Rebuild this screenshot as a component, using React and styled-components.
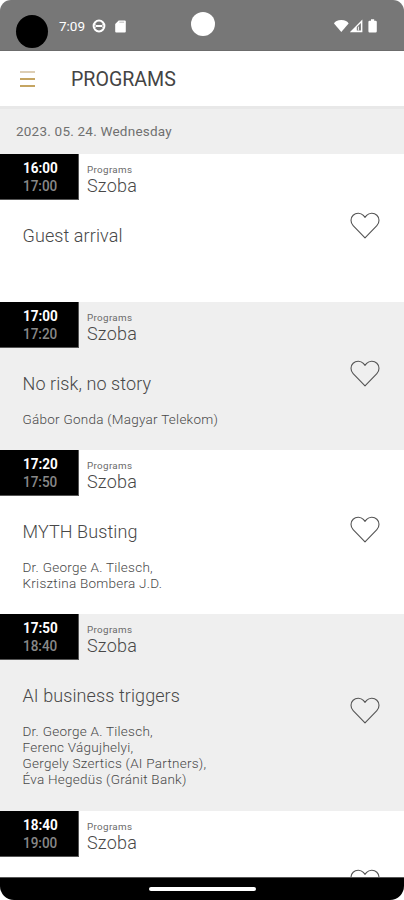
import React from 'react'
import styled, { createGlobalStyle } from 'styled-components'

const programs = [
    { start: '16:00', end: '17:00', title: 'Guest arrival', speakers: [] },
    { start: '17:00', end: '17:20', title: 'No risk, no story', speakers: ['Gábor Gonda (Magyar Telekom)'] },
    { start: '17:20', end: '17:50', title: 'MYTH Busting', speakers: ['Dr. George A. Tilesch,', 'Krisztina Bombera J.D.'] },
    {
        start: '17:50', end: '18:40', title: 'AI business triggers',
        speakers: ['Dr. George A. Tilesch,', 'Ferenc Vágujhelyi,', 'Gergely Szertics (AI Partners),', 'Éva Hegedüs (Gránit Bank)'],
    },
    { start: '18:40', end: '19:00', title: '', speakers: [] },
]

// row heights follow the number of speakers
const rowHeight = (count) => (count < 2 ? 148 : count === 2 ? 164 : 197)

function Heart() {
    return (
        <svg width="30" height="27" viewBox="0 0 31 28" fill="none" stroke="#555" strokeWidth="1.15" strokeLinejoin="round">
            <path d="M15.5 26.8 L3.2 14.1 C0.2 11 0.3 6.1 3.2 3.4 C6.3 0.5 11.1 0.8 13.8 3.6 L15.5 5.5 L17.2 3.6 C19.9 0.8 24.7 0.5 27.8 3.4 C30.7 6.1 30.8 11 27.8 14.1 Z" />
        </svg>
    )
}

function StatusBar() {
    return (
        <Status>
            <Bubble />
            <Clock>7:09</Clock>
            <Globe width="14" height="14" viewBox="0 0 14 14" fill="none" stroke="#fff">
                <circle cx="7" cy="7" r="5.4" strokeWidth="2" />
                <path d="M3.6 7h6.8" strokeWidth="1.8" />
                <path d="M1.6 5.6h2.2M10.2 5.6h2.2M1.6 8.4h2.2M10.2 8.4h2.2" strokeWidth="0.8" />
            </Globe>
            <CardIcon width="11" height="13" viewBox="0 0 11 13">
                <path d="M3.7 0.5H9.8Q10.8 0.5 10.8 1.5V11.5Q10.8 12.5 9.8 12.5H1.2Q0.2 12.5 0.2 11.5V4Z" fill="#fff" />
                <path d="M4.3 2.2h4.8" stroke="#a8a8a8" strokeWidth="0.8" />
            </CardIcon>
            <Camera />
            <Signals width="44" height="15" viewBox="0 0 44 15">
                <path d="M0 4.4Q1.5 0.9 7.3 0.9T14.6 4.4L7.3 13Z" fill="#fff" />
                <path d="M28.4 0.6V13.2H15.8Z" fill="#fff" />
                <path d="M22.8 11.4V8L26.9 4V11.4Z" fill="#777" />
                <path d="M24.4 7.6V11.4" stroke="#fff" strokeWidth="0.9" />
                <path d="M37 0.3h3.2v1.4h1.4q1.2 0 1.2 1.2v9.4q0 1.2-1.2 1.2h-6q-1.2 0-1.2-1.2V2.9q0-1.2 1.2-1.2H37z" fill="#fff" />
            </Signals>
        </Status>
    )
}

function Program({ item, gray }) {
    return (
        <Row $gray={gray} $height={rowHeight(item.speakers.length)}>
            <Info>
                <RowHead>
                    <TimeBox>
                        <Time $bold>{item.start}</Time>
                        <Time>{item.end}</Time>
                    </TimeBox>
                    <Place>
                        <Kind>Programs</Kind>
                        <Room>Szoba</Room>
                    </Place>
                </RowHead>
                <Title>{item.title}</Title>
                {item.speakers.map((name) => <Speaker key={name}>{name}</Speaker>)}
            </Info>
            <Favorite><Heart /></Favorite>
        </Row>
    )
}

function App() {
    return (
        <>
            <GlobalStyle />
            <Phone>
                <StatusBar />
                <Header>
                    <MenuButton>
                        <Line $pale /><Line /><Line />
                    </MenuButton>
                    <PageTitle>PROGRAMS</PageTitle>
                </Header>
                <DateBar>2023. 05. 24. Wednesday</DateBar>
                <List>
                    {programs.map((item, i) => <Program key={item.start} item={item} gray={i % 2 === 1} />)}
                </List>
                <NavBar><Handle /></NavBar>
            </Phone>
        </>
    )
}

const GlobalStyle = createGlobalStyle`
  * {
    box-sizing: border-box;
  }
  body {
    margin: 0;
    background: #fff;
    font-family: Roboto, sans-serif;
  }
  svg {
    display: block;
    flex-shrink: 0;
  }
`

const Phone = styled.div`
    width: 404px;
    height: 900px;
    display: flex;
    flex-direction: column;
    overflow: hidden;
    border-radius: 11px 11px 14px 14px;
    background: #fff;
`

const Status = styled.div`
    height: 51px;
    flex-shrink: 0;
    display: flex;
    align-items: center;
    padding-left: 16px;
    background: #777;
    border-bottom: 1px solid #6c6c6c;
`

const Bubble = styled.div`
    width: 32px;
    height: 33px;
    margin-top: 12px;
    border-radius: 50%;
    background: #000;
`

const Clock = styled.span`
    width: 33px;
    margin-left: 11px;
    margin-top: 2px;
    color: #fff;
    font-size: 13.5px;
    line-height: 16px;
`

const Globe = styled.svg`
    margin-top: 2px;
`

const CardIcon = styled.svg`
    margin-left: 9px;
    margin-top: 2px;
`

const Camera = styled.div`
    width: 24px;
    height: 24px;
    margin-left: 65px;
    margin-top: -3px;
    border-radius: 50%;
    background: #fff;
`

const Signals = styled.svg`
    margin-left: 119px;
    margin-top: 2px;
`

const Header = styled.header`
    height: 55px;
    flex-shrink: 0;
    display: flex;
    align-items: center;
    padding-left: 20px;
`

const MenuButton = styled.div`
    width: 51px;
    display: flex;
    flex-direction: column;
    gap: 5px;
    padding-top: 1px;
`

const Line = styled.div`
    width: 15px;
    height: 2px;
    background: ${({ $pale }) => ($pale ? '#ddceb4' : '#c5a562')};
`

const PageTitle = styled.h1`
    margin: 1px 0 0;
    color: #444;
    font-size: 20.5px;
    font-weight: 400;
    line-height: 24px;
    transform: scaleX(0.955);
    transform-origin: left;
`

const DateBar = styled.div`
    height: 48px;
    flex-shrink: 0;
    padding: 3px 0 0 16px;
    border-top: 3px solid #e8e8e8;
    background: #efefef;
    color: #707070;
    font-size: 13.5px;
    line-height: 38px;
    letter-spacing: 0.22px;
`

const List = styled.div`
    flex: 1;
    min-height: 0;
    overflow: hidden;
`

const Row = styled.div`
    display: flex;
    height: ${({ $height }) => $height}px;
    background: ${({ $gray }) => ($gray ? '#efefef' : '#fff')};
`

const Info = styled.div`
    flex: 1;
`

const RowHead = styled.div`
    display: flex;
    height: 46px;
`

const TimeBox = styled.div`
    width: 79px;
    padding: 5px 0 0 23px;
    background: #000;
    border-right: 1px solid #555;
    border-bottom: 1px solid #555;
`

const Time = styled.div`
    color: ${({ $bold }) => ($bold ? '#fff' : '#888')};
    font-size: 15px;
    font-weight: ${({ $bold }) => ($bold ? 700 : 500)};
    line-height: 18px;
    transform: scaleX(0.9);
    transform-origin: left;
`

const Place = styled.div`
    padding: 10px 0 0 8px;
    color: #484848;
`

const Kind = styled.div`
    color: #6a6a6a;
    font-size: 9.8px;
    line-height: 11px;
    letter-spacing: 0.35px;
`

const Room = styled.div`
    font-size: 18px;
    font-weight: 300;
    line-height: 21px;
    letter-spacing: 0.2px;
`

const Title = styled.div`
    height: 22px;
    margin: 25px 0 16px;
    padding-left: 22.5px;
    color: #484848;
    font-size: 18px;
    font-weight: 300;
    line-height: 22px;
    letter-spacing: 0.09px;
`

const Speaker = styled.div`
    padding-left: 22.5px;
    color: #484848;
    font-size: 13.5px;
    font-weight: 300;
    line-height: 16.1px;
    letter-spacing: 0.26px;
    white-space: nowrap;
`

const Favorite = styled.div`
    display: flex;
    align-items: center;
    padding: 0 24px 5px 0;
`

const NavBar = styled.div`
    height: 23px;
    flex-shrink: 0;
    display: flex;
    justify-content: center;
    align-items: center;
    background: #000;
    border-top: 1px solid #555;
`

const Handle = styled.div`
    width: 107px;
    height: 4px;
    border-radius: 2px;
    background: #fff;
`

export default App
